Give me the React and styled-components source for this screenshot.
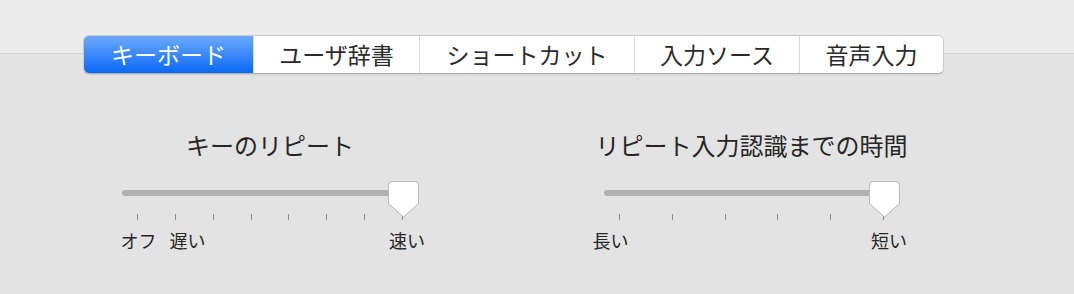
import styled, { createGlobalStyle } from "styled-components";

const GlobalStyle = createGlobalStyle`
    html, body {
        margin: 0;
        padding: 0;
    }
    body {
        background: linear-gradient(#ececec 0, #ececec 53px, #d2d2d2 53px, #d2d2d2 54px, #e3e3e3 54px);
        font-family: "Noto Sans CJK JP", "Noto Sans", sans-serif;
        color: #262626;
        height: 294px;
        overflow: hidden;
    }
`

const Page = styled.div`
    padding-top: 35px;
`

const TabBar = styled.div`
    display: flex;
    margin-left: 83px;
    width: max-content;
    height: 39px;
    box-sizing: border-box;
    border: 1px solid #c9c9c9;
    border-bottom-color: #adadad;
    border-radius: 6px;
    overflow: hidden;
    background: #fff;
    box-shadow: 0 1px 1px rgba(0,0,0,0.08);
`

const Tab = styled.div`
    width: ${p => p.$w}px;
    display: flex;
    align-items: center;
    justify-content: center;
    font-size: 23px;
    line-height: 1;
    padding-bottom: 1px;
    white-space: nowrap;
    color: ${p => p.$active ? "#fff" : "#2a2a2a"};
    background: ${p => p.$active ? "linear-gradient(#6ca8fb, #0b69f6)" : "#fff"};
    border-left: ${p => p.$first ? "none" : "1px solid #dadada"};
    box-sizing: border-box;
`

const Panels = styled.div`
    display: flex;
    gap: 186px;
    padding-left: 122px;
    margin-top: 55px;
`

const Column = styled.div`
    display: flex;
    flex-direction: column;
    align-items: center;
    width: ${p => p.$w}px;
`

const Title = styled.div`
    font-size: 24px;
    line-height: 32px;
    white-space: nowrap;
    color: #262626;
    margin-bottom: 20px;
`

const SliderBox = styled.div`
    position: relative;
    width: 100%;
    height: 24px;
`

const Track = styled.div`
    margin-top: 9px;
    height: 6px;
    border-radius: 3px;
    background: #b1b1b1;
`

const Thumb = styled.svg`
    position: absolute;
    top: 0;
    filter: drop-shadow(0 0.5px 0.5px rgba(0,0,0,0.15));
`

const TickRow = styled.div`
    display: flex;
    justify-content: space-between;
    width: 100%;
    box-sizing: border-box;
    padding: 0 15px;
    margin-top: 9px;
`

const Tick = styled.div`
    width: 1px;
    height: 6px;
    background: #8c8c8c;
`

const LabelRow = styled.div`
    position: relative;
    width: 100%;
    height: 22px;
    margin-top: 9px;
`

const Label = styled.span`
    position: absolute;
    top: 0;
    transform: translateX(-50%);
    font-size: 18px;
    line-height: 22px;
    white-space: nowrap;
    color: #262626;
`

const tabs = [
    { label: "キーボード", w: 169, active: true },
    { label: "ユーザ辞書", w: 166 },
    { label: "ショートカット", w: 215 },
    { label: "入力ソース", w: 165 },
    { label: "音声入力", w: 144 },
]

const sliders = [
    {
        title: "キーのリピート",
        ticks: 8,
        step: 38,
        value: 7,
        labels: [
            { text: "オフ", x: 16.5 },
            { text: "遅い", x: 65.5 },
            { text: "速い", x: 285 },
        ],
    },
    {
        title: "リピート入力認識までの時間",
        ticks: 6,
        step: 53,
        value: 5,
        labels: [
            { text: "長い", x: 6.5 },
            { text: "短い", x: 285 },
        ],
    },
]

const Slider = ({ s }) => {
    const width = (s.ticks - 1) * s.step + 30
    const thumbLeft = 15 + s.value * s.step - 15.5
    return (
        <Column $w={width}>
            <Title>{s.title}</Title>
            <SliderBox>
                <Track />
                <Thumb width="31" height="37" viewBox="0 0 31 37" style={{ left: thumbLeft }}>
                    <path
                        d="M4.5 0.5 H26.5 Q30.5 0.5 30.5 4.5 V22.5 L15.5 36 L0.5 22.5 V4.5 Q0.5 0.5 4.5 0.5 Z"
                        fill="#fff"
                        stroke="#b9b9b9"
                        strokeWidth="1"
                    />
                </Thumb>
            </SliderBox>
            <TickRow>
                {Array.from({ length: s.ticks }).map((_, i) => <Tick key={i} />)}
            </TickRow>
            <LabelRow>
                {s.labels.map(l => (
                    <Label key={l.text} style={{ left: l.x }}>{l.text}</Label>
                ))}
            </LabelRow>
        </Column>
    )
}

const App = () => {
    return (
        <Page>
            <GlobalStyle />
            <TabBar>
                {tabs.map((t, i) => (
                    <Tab key={t.label} $w={t.w} $active={t.active} $first={i === 0}>{t.label}</Tab>
                ))}
            </TabBar>
            <Panels>
                {sliders.map(s => <Slider key={s.title} s={s} />)}
            </Panels>
        </Page>
    )
}

export default App;
